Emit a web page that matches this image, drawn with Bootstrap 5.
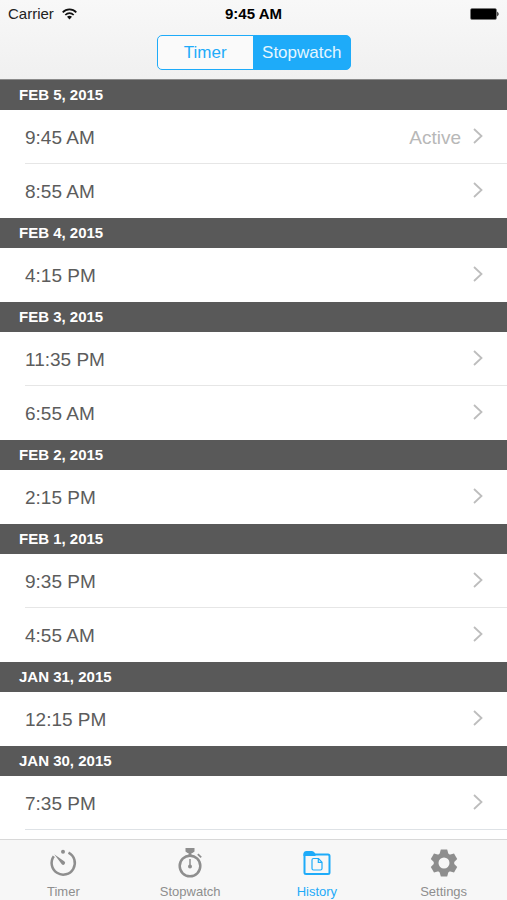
<!DOCTYPE html>
<html lang="en">
<head>
<meta charset="utf-8">
<meta name="viewport" content="width=device-width, initial-scale=1">
<title>History</title>
<link href="https://cdn.jsdelivr.net/npm/bootstrap@5.3.0/dist/css/bootstrap.min.css" rel="stylesheet">
<style>
  :root { --accent: #1eabf9; --bar: #f7f7f7; --muted: #8e8e8e; }
  body { font-family: "Liberation Sans", Arial, sans-serif; color: #000; }
  .top-bar { background: linear-gradient(#f8f8f8, #f0f0f0); height: 80px; border-bottom: 1px solid #8a8a8a; }
  .status { font-size: 15px; line-height: 28px; padding: 0 8px; color: #222; }
  .status .clock { color: #000; }
  .segments { width: 194px; height: 35px; margin-top: 7px; }
  .segments .btn {
    --bs-btn-color: var(--accent); --bs-btn-border-color: var(--accent);
    --bs-btn-active-bg: var(--accent); --bs-btn-active-border-color: var(--accent); --bs-btn-active-color: #e4f6ff;
    --bs-btn-bg: #fafafa; --bs-btn-border-radius: 5px; --bs-btn-padding-x: 0; --bs-btn-padding-y: 0;
    font-size: 17px; line-height: 33px; flex: 1 1 0; transition: none;
  }
  .segments .btn-check + .btn, .segments .btn-check:checked + .btn { border-color: var(--accent); }
  .day-title {
    background: #595959; color: #fff; font-size: 15px; font-weight: 700; line-height: 28px;
    padding: 1px 19px; margin: 0;
  }
  .entries .list-group-item {
    height: 54px; margin-left: 25px; padding: 0 24px 2px 0; font-size: 19px; line-height: 24px;
    color: #5c5c5c; border-color: #e6e6e6; width: auto; background: #fff;
  }
  .entries span { padding-top: 4px; }
  .entries .state { color: #b8b8b8; margin-right: 12px; }
  .tab-bar { background: var(--bar); border-top: 1px solid #d8d8d8; height: 61px; }
  .tab-bar .nav-link { color: var(--muted); font-size: 13px; line-height: 16px; padding: 8px 0 0; flex: 1 1 0; transition: none; }
  .tab-bar .nav-link svg { margin-bottom: 6px; }
  .tab-bar .nav-link.active { color: var(--accent); }
</style>
<script src="https://cdn.jsdelivr.net/npm/bootstrap@5.3.0/dist/js/bootstrap.bundle.min.js" defer></script>
</head>
<body class="vh-100 d-flex flex-column overflow-hidden">
<svg class="d-none" aria-hidden="true">
  <symbol id="chevron" viewBox="0 0 10 16"><path d="M1 1l7.500 7L1 15" fill="none" stroke="#bdbdbd" stroke-width="1.800"/></symbol>
</svg>

<header class="top-bar flex-shrink-0">
  <div class="status row g-0 align-items-center">
    <div class="col d-flex align-items-center gap-2">
      <span>Carrier</span>
      <svg width="15" height="12" viewBox="0 0 15 12" aria-label="Wi-Fi"><g fill="none" stroke="#111" stroke-width="1.700"><path d="M.7 4.300C4.500.3 10.500.3 14.300 4.300"/><path d="M3.300 7C5.800 4.500 9.200 4.500 11.700 7"/></g><path d="M5 8.700q2.500-2 5 0L7.500 11.500z" fill="#111"/></svg>
    </div>
    <div class="col-auto clock fw-bold">9:45 AM</div>
    <div class="col d-flex justify-content-end">
      <svg width="30" height="12" viewBox="0 0 30 12" aria-label="Battery full"><rect x="1.500" y=".5" width="26" height="11" rx="1.500" fill="#000" stroke="#777" stroke-width=".6"/><path d="M28.300 3.500q2.600 2.500 0 5z" fill="#000"/></svg>
    </div>
  </div>
  <div class="d-flex justify-content-center">
    <div class="segments btn-group" role="group" aria-label="History type">
      <input type="radio" class="btn-check" name="kind" id="kind-timer" autocomplete="off">
      <label class="btn" for="kind-timer">Timer</label>
      <input type="radio" class="btn-check" name="kind" id="kind-stopwatch" autocomplete="off" checked>
      <label class="btn" for="kind-stopwatch">Stopwatch</label>
    </div>
  </div>
</header>

<main class="flex-grow-1 overflow-auto bg-white">
  <section>
    <h2 class="day-title">FEB 5, 2015</h2>
    <div class="entries list-group list-group-flush">
      <a href="#" class="list-group-item d-flex align-items-center"><span class="me-auto">9:45 AM</span><span class="state">Active</span><svg width="10" height="16"><use href="#chevron"/></svg></a>
      <a href="#" class="list-group-item d-flex align-items-center"><span class="me-auto">8:55 AM</span><svg width="10" height="16"><use href="#chevron"/></svg></a>
    </div>
  </section>
  <section>
    <h2 class="day-title">FEB 4, 2015</h2>
    <div class="entries list-group list-group-flush">
      <a href="#" class="list-group-item d-flex align-items-center"><span class="me-auto">4:15 PM</span><svg width="10" height="16"><use href="#chevron"/></svg></a>
    </div>
  </section>
  <section>
    <h2 class="day-title">FEB 3, 2015</h2>
    <div class="entries list-group list-group-flush">
      <a href="#" class="list-group-item d-flex align-items-center"><span class="me-auto">11:35 PM</span><svg width="10" height="16"><use href="#chevron"/></svg></a>
      <a href="#" class="list-group-item d-flex align-items-center"><span class="me-auto">6:55 AM</span><svg width="10" height="16"><use href="#chevron"/></svg></a>
    </div>
  </section>
  <section>
    <h2 class="day-title">FEB 2, 2015</h2>
    <div class="entries list-group list-group-flush">
      <a href="#" class="list-group-item d-flex align-items-center"><span class="me-auto">2:15 PM</span><svg width="10" height="16"><use href="#chevron"/></svg></a>
    </div>
  </section>
  <section>
    <h2 class="day-title">FEB 1, 2015</h2>
    <div class="entries list-group list-group-flush">
      <a href="#" class="list-group-item d-flex align-items-center"><span class="me-auto">9:35 PM</span><svg width="10" height="16"><use href="#chevron"/></svg></a>
      <a href="#" class="list-group-item d-flex align-items-center"><span class="me-auto">4:55 AM</span><svg width="10" height="16"><use href="#chevron"/></svg></a>
    </div>
  </section>
  <section>
    <h2 class="day-title">JAN 31, 2015</h2>
    <div class="entries list-group list-group-flush">
      <a href="#" class="list-group-item d-flex align-items-center"><span class="me-auto">12:15 PM</span><svg width="10" height="16"><use href="#chevron"/></svg></a>
    </div>
  </section>
  <section>
    <h2 class="day-title">JAN 30, 2015</h2>
    <div class="entries list-group list-group-flush">
      <a href="#" class="list-group-item d-flex align-items-center border-bottom"><span class="me-auto">7:35 PM</span><svg width="10" height="16"><use href="#chevron"/></svg></a>
    </div>
  </section>
</main>

<nav class="tab-bar nav flex-nowrap flex-shrink-0" aria-label="Main">
  <a class="nav-link d-flex flex-column align-items-center" href="#">
    <svg width="30" height="30" viewBox="0 0 30 30"><path d="M20.500 4.700A11.600 11.600 0 1 1 5.800 8.300" fill="none" stroke="currentColor" stroke-width="2.500"/><circle cx="15" cy="3.700" r="2" fill="currentColor"/><path d="M6.200 6.200l10.300 7.300a1.900 1.900 0 0 1-2.700 2.700z" fill="currentColor"/></svg>
    Timer</a>
  <a class="nav-link d-flex flex-column align-items-center" href="#">
    <svg width="30" height="30" viewBox="0 0 30 30"><g fill="currentColor"><path d="M10.500 0h9v3.500l-2 1.500h-5l-2-1.500z"/><path d="M13.500 4h3v4h-3z"/><path d="M23.500 5.500l3.300 3.200-1.300 1.300-3.300-3.200z"/><circle cx="15" cy="18.500" r="2"/></g><circle cx="15" cy="18" r="10.300" fill="none" stroke="currentColor" stroke-width="2.500"/><path d="M15 11v7" stroke="currentColor" stroke-width="1.500"/></svg>
    Stopwatch</a>
  <a class="nav-link active d-flex flex-column align-items-center" href="#" aria-current="page">
    <svg width="30" height="30" viewBox="0 0 30 30"><path d="M1.500 8V6q0-3 3-3h5.500q1.500 0 2.500 1.500l1 1.500v2z" fill="currentColor"/><path d="M2.500 6.500h23.500q1.500 0 1.500 1.500v16.500q0 1.500-1.500 1.500H4q-1.500 0-1.500-1.500z" fill="none" stroke="currentColor" stroke-width="2"/><path d="M11.500 10.500h5l3.500 3.700v6.300q0 1.500-1.500 1.500h-7Q10 22 10 20.500V12q0-1.500 1.500-1.500zM16.300 10.700v3.700H20" fill="none" stroke="currentColor" stroke-width="1.200"/></svg>
    History</a>
  <a class="nav-link d-flex flex-column align-items-center" href="#">
    <svg width="30" height="30" viewBox="0 0 30 30"><circle cx="15" cy="15" r="7.900" fill="none" stroke="currentColor" stroke-width="4.800"/><g fill="currentColor"><path id="tooth" d="M10.300 7l1.500-5.400h6.400l1.500 5.400z"/><use href="#tooth" transform="rotate(60 15 15)"/><use href="#tooth" transform="rotate(120 15 15)"/><use href="#tooth" transform="rotate(180 15 15)"/><use href="#tooth" transform="rotate(240 15 15)"/><use href="#tooth" transform="rotate(300 15 15)"/></g></svg>
    Settings</a>
</nav>
</body>
</html>
